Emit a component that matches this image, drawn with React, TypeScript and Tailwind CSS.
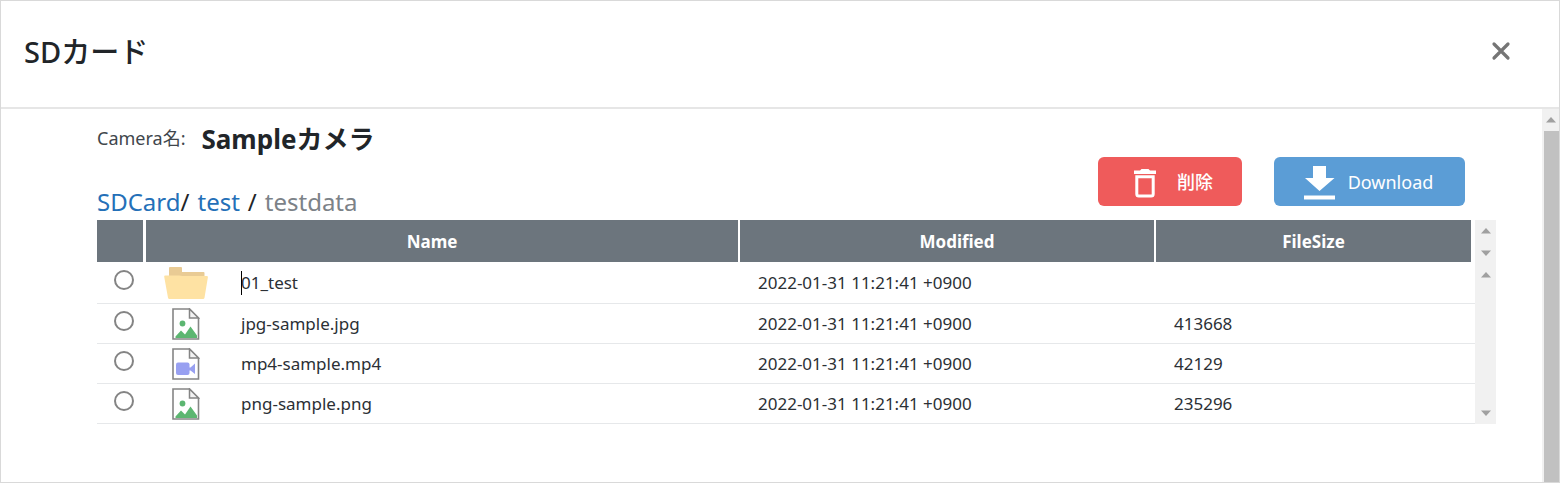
import { useState } from "react";

type Kind = "folder" | "image" | "video";

type Entry = {
  name: string;
  kind: Kind;
  modified: string;
  size: string;
};

const entries: Entry[] = [
  { name: "01_test", kind: "folder", modified: "2022-01-31 11:21:41 +0900", size: "" },
  { name: "jpg-sample.jpg", kind: "image", modified: "2022-01-31 11:21:41 +0900", size: "413668" },
  { name: "mp4-sample.mp4", kind: "video", modified: "2022-01-31 11:21:41 +0900", size: "42129" },
  { name: "png-sample.png", kind: "image", modified: "2022-01-31 11:21:41 +0900", size: "235296" },
];

function FolderIcon() {
  return (
    <svg viewBox="0 0 44 32" className="h-8 w-11" aria-hidden="true">
      <path d="M5 1Q5 0 6 0H17Q18 0 18 1V5H39.500Q40.500 5 40.500 6V12H5Z" fill="#e9cb94" />
      <path d="M1.200 8.500H15L18.500 9H42.800Q44 9 43.900 10.200L40.500 30.800Q40.300 32 39 32H5.500Q4.200 32 4 30.800L0.200 9.800Q0 8.500 1.200 8.500Z" fill="#fee2a3" />
    </svg>
  );
}

function FileIcon({ kind }: { kind: Kind }) {
  return (
    <svg viewBox="0 0 28 32" className="h-8 w-7" aria-hidden="true">
      <path d="M1 1H17.500L26.500 10V31H1Z" fill="#fff" stroke="#858585" strokeWidth="1.600" />
      <path d="M17.500 1V10H26.500Z" fill="#f3f3f3" stroke="#858585" strokeWidth="1.500" />
      {kind === "image" ? (
        <g fill="#5cb671">
          <circle cx="10.500" cy="15.500" r="2.900" />
          <path d="M3.500 30V28.500L9 22.500L13 26.500L18.500 18.500L25 27.500V30Z" />
        </g>
      ) : (
        <g fill="#98a0f1">
          <rect x="4" y="14.500" width="13.500" height="12.500" rx="2" />
          <path d="M17 19.500H18.500L23 15.500V26L18.500 22.500H17Z" />
        </g>
      )}
    </svg>
  );
}

function TrashIcon() {
  return (
    <svg viewBox="0 0 24 30" className="h-[30px] w-6" fill="none" aria-hidden="true">
      <path d="M1 2.500H7L8.500 1H15.500L17 2.500H23V6H1Z" fill="#fff" />
      <path d="M3.800 8.800H20.200V26Q20.200 28 18.200 28H5.800Q3.800 28 3.800 26Z" stroke="#fff" strokeWidth="3" />
    </svg>
  );
}

function DownloadIcon() {
  return (
    <svg viewBox="0 0 32 34" className="h-[34px] w-8" fill="#fff" aria-hidden="true">
      <path d="M9 0H22V12H30.500L15.500 25L1 12H9Z" />
      <path d="M0 29.500H31V33.500H0Z" />
    </svg>
  );
}

function ScrollButton({ down = false, label }: { down?: boolean; label: string }) {
  return (
    <button type="button" aria-label={label} className="flex h-[22px] w-full items-center justify-center">
      <svg viewBox="0 0 10 6" className="h-1.5 w-2.5" fill="#a0a0a0" aria-hidden="true">
        <path d={down ? "M0 0.500H10L5 6Z" : "M0 5.500H10L5 0Z"} />
      </svg>
    </button>
  );
}

export default function App() {
  const [selected, setSelected] = useState("");

  return (
    <main className="flex min-h-screen flex-col border border-[#d9d9d9] bg-white font-['Noto_Sans','Noto_Sans_CJK_JP',sans-serif] text-[#212529]">
      <header className="flex h-[108px] items-center justify-between border-b-2 border-[#e6e6e6] pr-12 pl-[23px]">
        <h1 className="pb-1 text-[29px] font-medium">SDカード</h1>
        <button type="button" aria-label="Close" className="mb-1.5 flex size-5 items-center justify-center">
          <svg viewBox="0 0 20 20" className="size-5" aria-hidden="true">
            <path d="M3 3L17 17M17 3L3 17" stroke="#757575" strokeWidth="3.200" strokeLinecap="round" />
          </svg>
        </button>
      </header>

      <div className="flex flex-1">
        <div className="min-w-0 flex-1 pr-[46px] pl-24">
          <div className="flex items-end justify-between">
            <div className="pt-3 pb-0.5">
              <div className="flex h-9 items-center gap-4">
                <span className="pb-0.5 text-[18px] text-[#40464c]">Camera名:</span>
                <h2 className="text-[26px] font-bold">Sampleカメラ</h2>
              </div>
              <nav aria-label="Path" className="mt-[29px] flex gap-2 text-2xl leading-8">
                <span>
                  <a href="#sdcard" className="text-[#2470b8]">SDCard</a>/
                </span>
                <a href="#test" className="text-[#2470b8]">test</a>
                <span>/</span>
                <span className="text-[#7c8288]">testdata</span>
              </nav>
            </div>
            <div className="mr-[31px] mb-3.5 flex gap-8 text-[18px] text-white">
              <button type="button" className="flex h-[49px] w-36 items-center justify-center gap-5 rounded-md bg-[#ef5b5b] pt-0.5 pl-1.5 font-medium">
                <TrashIcon />
                削除
              </button>
              <button type="button" className="flex h-[49px] w-[191px] items-center justify-center gap-3 rounded-md bg-[#5b9dd6] pt-0.5 pr-0.5">
                <DownloadIcon />
                Download
              </button>
            </div>
          </div>

          <div className="flex">
            <table className="min-w-0 flex-1 table-fixed border-separate border-spacing-0 text-[17px] leading-6">
              <colgroup>
                <col className="w-12" />
                <col />
                <col className="w-[416px]" />
                <col className="w-[319px]" />
              </colgroup>
              <thead>
                <tr className="h-[42px] text-white *:border-white *:bg-[#6c757d] *:pt-0.5 *:pb-0">
                  <th aria-label="Select" className="border-r-2" />
                  <th className="border-r-2 border-l pr-5 pl-0 font-bold">Name</th>
                  <th className="border-r-2 pr-0 pl-5 font-bold">Modified</th>
                  <th className="border-r-4 px-0 font-bold">FileSize</th>
                </tr>
              </thead>
              <tbody>
                {entries.map((entry) => (
                  <tr key={entry.name} className="h-10 text-[#2b3035] first:h-[42px] *:border-b *:border-[#e6e8ea] *:p-0">
                    <td>
                      <input
                        type="radio"
                        name="entry"
                        aria-label={entry.name}
                        checked={selected === entry.name}
                        onChange={() => setSelected(entry.name)}
                        className="mb-1.5 ml-[17px] block size-5 appearance-none rounded-full border-2 border-[#848484] bg-white checked:border-[6px] checked:border-[#0075ff]"
                      />
                    </td>
                    <td>
                      <div className="flex items-center gap-[33px] pt-px pl-[19px]">
                        <span className="flex w-11 justify-center">
                          {entry.kind === "folder" ? <FolderIcon /> : <FileIcon kind={entry.kind} />}
                        </span>
                        <span className="relative">
                          {entry.kind === "folder" && <span className="absolute top-0 left-0 h-6 w-px bg-black" />}
                          {entry.name}
                        </span>
                      </div>
                    </td>
                    <td className="[&&]:pt-px [&&]:pl-[18px]">{entry.modified}</td>
                    <td className="[&&]:pt-px [&&]:pl-[18px]">{entry.size}</td>
                  </tr>
                ))}
              </tbody>
            </table>
            <div className="flex w-[21px] flex-col bg-[#f1f1f1]">
              <ScrollButton label="Scroll header up" />
              <ScrollButton label="Scroll header down" down />
              <ScrollButton label="Scroll files up" />
              <div className="flex-1" />
              <ScrollButton label="Scroll files down" down />
            </div>
          </div>
        </div>

        <div className="flex w-[17px] flex-col bg-[#f1f1f1]">
          <ScrollButton label="Scroll up" />
          <div className="ml-0.5 flex-1 bg-[#c1c1c1]" />
        </div>
      </div>
    </main>
  );
}
